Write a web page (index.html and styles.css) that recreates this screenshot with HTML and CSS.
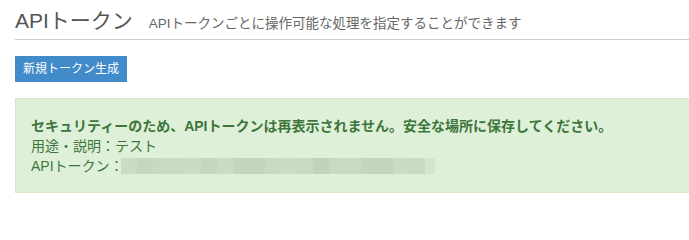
FILE: index.html
```html
<!DOCTYPE html>
<html lang="ja">
<head>
<meta charset="utf-8">
<title>APIトークン</title>
<link rel="stylesheet" href="styles.css">
</head>
<body>
<div class="page">
  <div class="header">
    <h1 class="title">APIトークン</h1>
    <span class="subtitle">APIトークンごとに操作可能な処理を指定することができます</span>
  </div>
  <button class="btn" type="button">新規トークン生成</button>
  <div class="alert">
    <div class="alert-strong">セキュリティーのため、APIトークンは再表示されません。安全な場所に保存してください。</div>
    <div class="alert-line">用途・説明：テスト</div>
    <div class="alert-line">APIトークン：<span class="token"><span class="m t2"></span><span class="m t3"></span><span class="m t1"></span><span class="m t1"></span><span class="m t2"></span><span class="m t3"></span><span class="m t2"></span><span class="m t4"></span><span class="m t4"></span><span class="m t1"></span><span class="m t2"></span><span class="m t1"></span><span class="m t5"></span><span class="m t1"></span><span class="m t1"></span><span class="m t4"></span><span class="m t4"></span><span class="m t2"></span><span class="m t1"></span><span class="m end"></span></span></div>
  </div>
</div>
</body>
</html>
```
FILE: styles.css
```css
html, body {
  margin: 0;
  padding: 0;
  background: #fff;
}
body {
  font-family: "Liberation Sans", "Noto Sans CJK JP", sans-serif;
}
.page {
  padding-left: 15px;
  overflow: hidden;
}
.header {
  display: flex;
  align-items: baseline;
  padding-top: 8px;
  padding-bottom: 6px;
  border-bottom: 1px solid #cccccc;
  margin-right: -20px;
}
.title {
  margin: 0;
  font-size: 21px;
  line-height: 25px;
  font-weight: normal;
  color: #555555;
}
.subtitle {
  margin-left: 16px;
  font-size: 13.5px;
  color: #666666;
}
.btn {
  display: block;
  margin-top: 16px;
  height: 26px;
  padding: 0 8px;
  border: 0;
  border-radius: 0;
  background: #428bca;
  color: #ffffff;
  font-family: inherit;
  font-size: 12px;
  line-height: 26px;
}
.alert {
  margin-top: 16px;
  margin-right: -20px;
  padding: 17px 15px 16px 15px;
  background: #dff0d8;
  border: 1px solid #d6e9c6;
  color: #3c763d;
  font-size: 14px;
  line-height: 20px;
}
.alert-strong {
  font-weight: bold;
}
.alert-line {
  display: flex;
  align-items: center;
}
.token {
  display: flex;
  height: 16px;
  margin-left: -3px;
}
.m {
  width: 16px;
  height: 16px;
}
.t1 { background: #c6dbc0; }
.t2 { background: #c8ddc3; }
.t3 { background: #c3d8bd; }
.t4 { background: #c1d6bb; }
.t5 { background: #bfd4b9; }
.end { width: 10px; background: #d3e6cd; }
```
